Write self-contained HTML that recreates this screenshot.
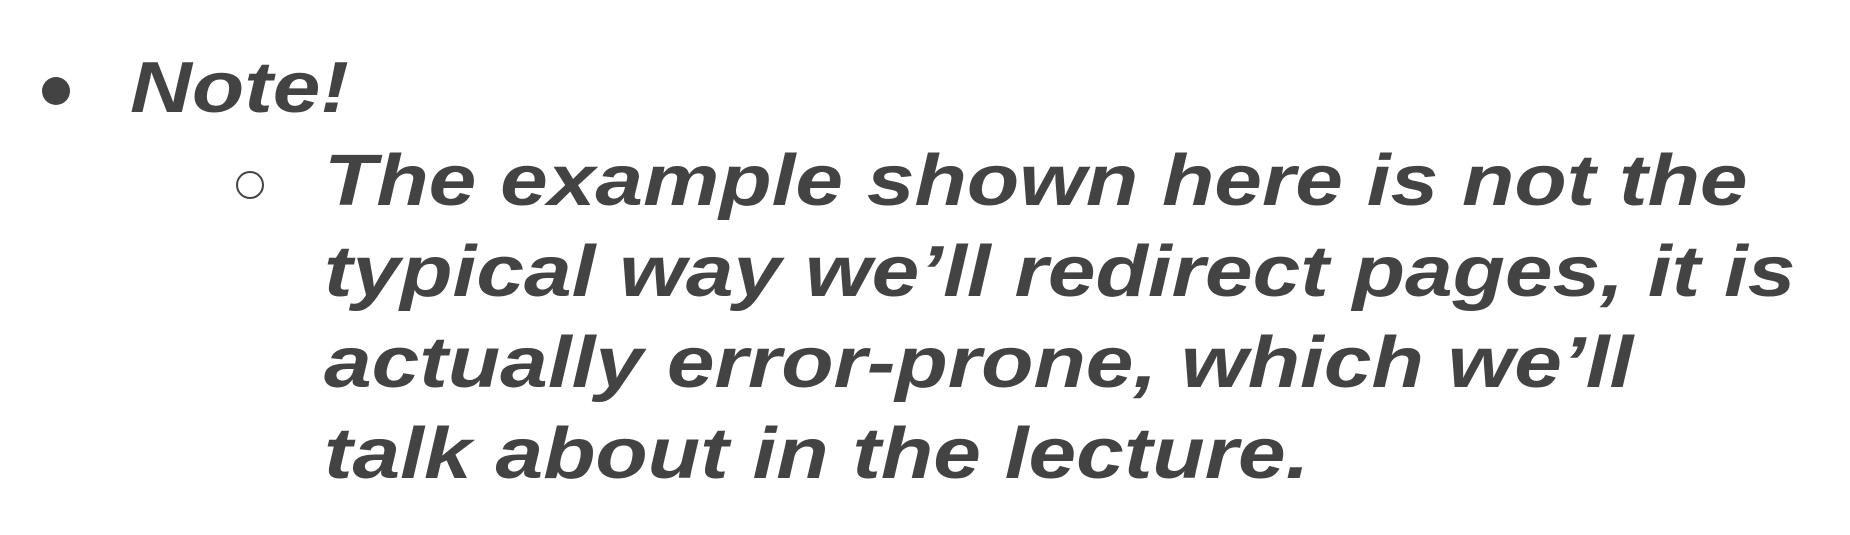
<!DOCTYPE html>
<html><head><meta charset="utf-8"><style>
html,body{margin:0;padding:0;background:#fff;width:1850px;height:535px;overflow:hidden}
.t{position:absolute;font-family:"Liberation Sans",sans-serif;font-weight:bold;font-style:italic;color:#434343;font-size:72px;white-space:nowrap;line-height:1;transform:scaleX(1.19);transform-origin:0 0}
.dot{position:absolute;left:42px;top:77px;width:28px;height:28px;border-radius:50%;background:#434343}
.circ{position:absolute;left:236px;top:171px;width:24px;height:24px;border-radius:50%;border:2.5px solid #434343}
</style></head><body>
<div class="dot"></div>
<div class="t" style="left:130px;top:52px">Note!</div>
<div class="circ"></div>
<div class="t" style="left:324px;top:145px">The example shown here is not the</div>
<div class="t" style="left:324px;top:236px">typical way we’ll redirect pages, it is</div>
<div class="t" style="left:324px;top:327px">actually error-prone, which we’ll</div>
<div class="t" style="left:324px;top:418px">talk about in the lecture.</div>
</body></html>
